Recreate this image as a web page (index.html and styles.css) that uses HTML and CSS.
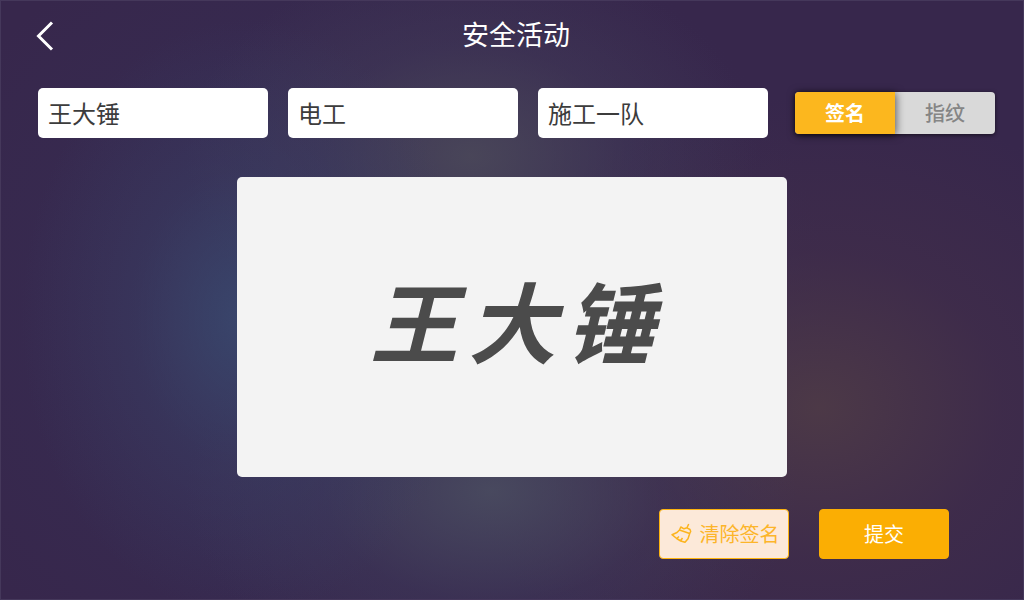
FILE: index.html
```html
<!DOCTYPE html>
<html lang="zh-CN">
<head>
<meta charset="utf-8">
<meta name="viewport" content="width=device-width, initial-scale=1">
<title>安全活动</title>
<link rel="stylesheet" href="styles.css">
</head>
<body>
<div class="page">
  <header class="header">
    <button class="back" type="button" aria-label="返回">
      <svg class="back-icon" viewBox="0 0 18 30" aria-hidden="true"><path d="M16 1.5 2.500 15 16 28.500"/></svg>
    </button>
    <h1 class="title">安全活动</h1>
  </header>
  <form class="form">
    <div class="fields">
      <input class="field" type="text" aria-label="姓名" value="王大锤">
      <input class="field" type="text" aria-label="工种" value="电工">
      <input class="field" type="text" aria-label="班组" value="施工一队">
      <div class="toggle" role="radiogroup" aria-label="确认方式">
        <label class="option"><input class="option-input" type="radio" name="mode" checked><span class="option-text">签名</span></label>
        <label class="option"><input class="option-input" type="radio" name="mode"><span class="option-text">指纹</span></label>
      </div>
    </div>
    <div class="pad">
      <p class="signature"><span>王</span><span>大</span><span>锤</span></p>
    </div>
    <div class="actions">
      <button class="button button-clear" type="button">
        <svg class="broom" viewBox="0 0 21 21" aria-hidden="true"><path d="M17.700 1 16 4.800M9.800 4l3.200 1.800 3-1 3 1.700.7 2-1 2L8.500 7zM8.500 7 6 9.500l-5 2.200L5.700 15.500l4 2.500 4.300 1.300 3-3.500 1.700-5.300M5.700 15.500 8 13.500M9.700 17.500l1.800-2.500"/></svg>
        清除签名
      </button>
      <button class="button button-submit" type="submit">提交</button>
    </div>
  </form>
</div>
</body>
</html>
```
FILE: styles.css
```css
* { box-sizing: border-box; }
body {
  margin: 0;
  font-family: "Liberation Sans", "Noto Sans CJK SC", sans-serif;
}
button, input { font: inherit; }
.page {
  min-height: 100vh;
  border: 1px solid #45385b;
  background:
    radial-gradient(ellipse 22% 50% at 24% 53%, rgba(58, 76, 114, .8), rgba(58, 68, 106, .35) 50%, rgba(56, 56, 96, 0)),
    radial-gradient(ellipse 28% 34% at 46% 26%, rgba(76, 74, 90, .85), rgba(70, 64, 90, .35) 55%, rgba(64, 50, 84, 0)),
    radial-gradient(ellipse 30% 34% at 48% 82%, rgba(74, 76, 96, .9), rgba(66, 62, 92, .35) 55%, rgba(60, 50, 86, 0)),
    radial-gradient(ellipse 36% 52% at 80% 68%, rgba(80, 60, 70, .85), rgba(72, 50, 72, .4) 50%, rgba(60, 42, 76, 0)),
    radial-gradient(ellipse 46% 70% at 35% 52%, rgba(54, 54, 94, .55), rgba(54, 46, 86, 0)),
    #37274c;
}
.header {
  display: grid;
  grid-template-columns: 60px 1fr 52px;
  align-items: center;
  height: 70px;
}
.back {
  display: flex;
  padding: 0 0 0 35px;
  border: 0;
  background: none;
  cursor: pointer;
}
.back-icon {
  width: 18px;
  height: 30px;
  fill: none;
  stroke: #fff;
  stroke-width: 3;
}
.title {
  margin: 0;
  text-align: center;
  color: #fff;
  font-size: 27px;
  font-weight: 400;
  line-height: 40px;
}
.fields {
  display: flex;
  align-items: center;
  gap: 20px;
  padding: 17px 28px 0 37px;
}
.field {
  flex: 1;
  min-width: 0;
  height: 50px;
  padding: 0 10px 2px;
  border: 0;
  border-radius: 5px;
  background: #fff;
  color: #3c3c3c;
  font-size: 24px;
}
.toggle {
  display: flex;
  width: 200px;
  height: 42px;
  margin-left: 7px;
  border-radius: 4px;
  background: #d9d9d9;
  box-shadow: 0 1px 4px rgba(0, 0, 0, .6);
}
.option { flex: 1; cursor: pointer; }
.option-input {
  position: absolute;
  opacity: 0;
}
.option-text {
  display: flex;
  align-items: center;
  justify-content: center;
  height: 100%;
  padding-bottom: 2px;
  border-radius: 4px 0 0 4px;
  color: #858585;
  font-size: 20px;
  font-weight: 500;
}
.option-input:checked + .option-text {
  background: #fcb71e;
  color: #fff;
  font-weight: 700;
  box-shadow: 1px 1px 8px rgba(0, 0, 0, .6);
}
.pad {
  display: grid;
  place-items: center;
  width: 100%;
  max-width: 550px;
  min-height: 300px;
  margin: 39px auto 0;
  border-radius: 5px;
  background: #f3f3f3;
}
.signature {
  display: flex;
  gap: 10px;
  margin: 0;
  color: #4b4b4b;
  font-size: 88px;
  font-style: italic;
  font-weight: 700;
  line-height: 120px;
}
.actions {
  display: flex;
  justify-content: flex-end;
  gap: 30px;
  padding: 32px 74px 32px;
}
.button {
  display: flex;
  align-items: center;
  justify-content: center;
  gap: 8px;
  width: 130px;
  height: 50px;
  padding: 0 0 2px;
  border: 1px solid #fdb40f;
  border-radius: 4px;
  font-size: 20px;
  white-space: nowrap;
  cursor: pointer;
}
.button-clear {
  padding-left: 2px;
  background: #fce9d9;
  color: #fcb52a;
}
.button-submit {
  border-color: #fbae03;
  background: #fbae03;
  color: #fff;
}
.broom {
  width: 21px;
  height: 21px;
  fill: none;
  stroke: #fcb41e;
  stroke-width: 1.5;
  stroke-linejoin: round;
}
```
